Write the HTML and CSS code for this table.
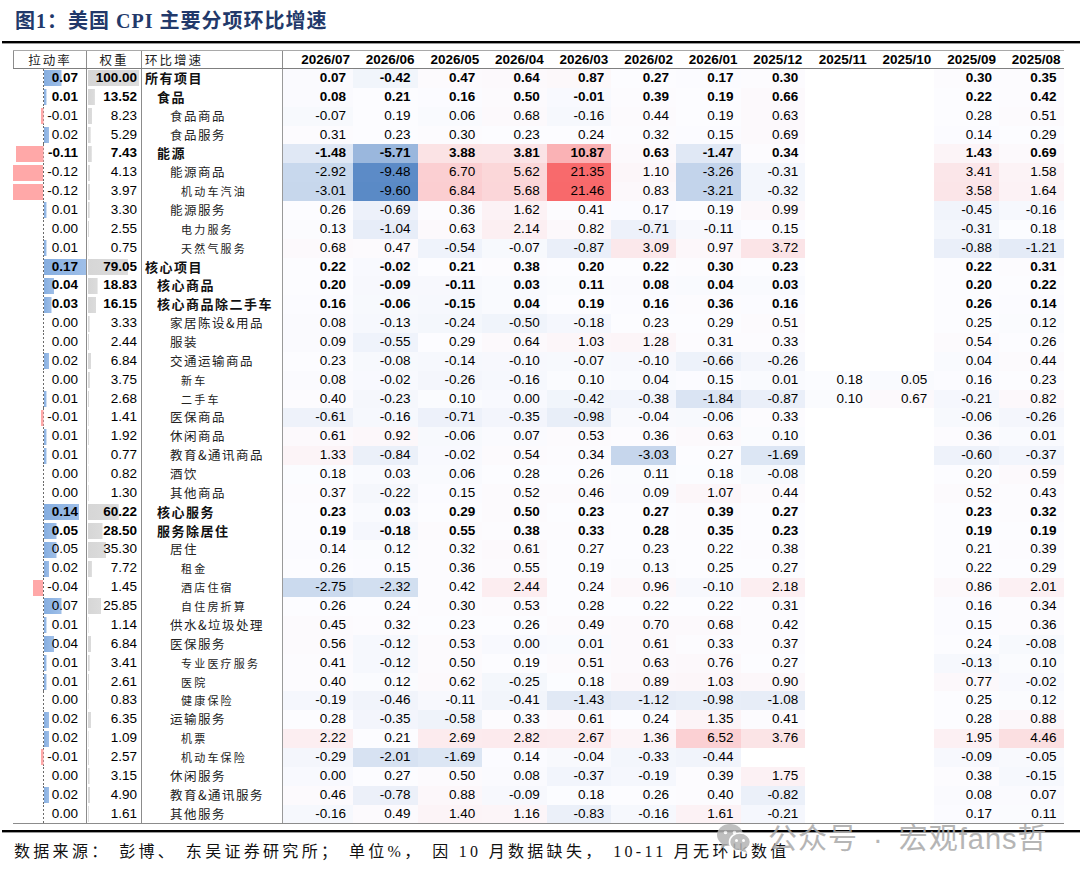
FILE: index.html
```html
<!DOCTYPE html>
<html lang="zh-CN">
<head>
<meta charset="utf-8">
<title>美国 CPI 主要分项环比增速</title>
<link rel="stylesheet" href="styles.css">
</head>
<body>
<div class="page">
  <div class="title">图1：美国 CPI 主要分项环比增速</div>
  <div class="rule"></div>
  <div class="table">
    <div class="row head">
      <div class="c hpull">拉动率</div><div class="c hwt">权重</div><div class="c hname">环比增速</div>
      <div class="c hv">2026/07</div><div class="c hv">2026/06</div><div class="c hv">2026/05</div><div class="c hv">2026/04</div><div class="c hv">2026/03</div><div class="c hv">2026/02</div><div class="c hv">2026/01</div><div class="c hv">2025/12</div><div class="c hv">2025/11</div><div class="c hv">2025/10</div><div class="c hv">2025/09</div><div class="c hv">2025/08</div>
    </div>
    <div class="row l0 b"><div class="c pull">0.07</div><div class="c wt">100.00</div><div class="c name">所有项目</div><div class="c v">0.07</div><div class="c v">-0.42</div><div class="c v">0.47</div><div class="c v">0.64</div><div class="c v">0.87</div><div class="c v">0.27</div><div class="c v">0.17</div><div class="c v">0.30</div><div class="c v"></div><div class="c v"></div><div class="c v">0.30</div><div class="c v">0.35</div></div>
    <div class="row l1 b"><div class="c pull">0.01</div><div class="c wt">13.52</div><div class="c name">食品</div><div class="c v">0.08</div><div class="c v">0.21</div><div class="c v">0.16</div><div class="c v">0.50</div><div class="c v">-0.01</div><div class="c v">0.39</div><div class="c v">0.19</div><div class="c v">0.66</div><div class="c v"></div><div class="c v"></div><div class="c v">0.22</div><div class="c v">0.42</div></div>
    <div class="row l2"><div class="c pull">-0.01</div><div class="c wt">8.23</div><div class="c name">食品商品</div><div class="c v">-0.07</div><div class="c v">0.19</div><div class="c v">0.06</div><div class="c v">0.68</div><div class="c v">-0.16</div><div class="c v">0.44</div><div class="c v">0.19</div><div class="c v">0.63</div><div class="c v"></div><div class="c v"></div><div class="c v">0.28</div><div class="c v">0.51</div></div>
    <div class="row l2"><div class="c pull">0.02</div><div class="c wt">5.29</div><div class="c name">食品服务</div><div class="c v">0.31</div><div class="c v">0.23</div><div class="c v">0.30</div><div class="c v">0.23</div><div class="c v">0.24</div><div class="c v">0.32</div><div class="c v">0.15</div><div class="c v">0.69</div><div class="c v"></div><div class="c v"></div><div class="c v">0.14</div><div class="c v">0.29</div></div>
    <div class="row l1 b"><div class="c pull">-0.11</div><div class="c wt">7.43</div><div class="c name">能源</div><div class="c v">-1.48</div><div class="c v">-5.71</div><div class="c v">3.88</div><div class="c v">3.81</div><div class="c v">10.87</div><div class="c v">0.63</div><div class="c v">-1.47</div><div class="c v">0.34</div><div class="c v"></div><div class="c v"></div><div class="c v">1.43</div><div class="c v">0.69</div></div>
    <div class="row l2"><div class="c pull">-0.12</div><div class="c wt">4.13</div><div class="c name">能源商品</div><div class="c v">-2.92</div><div class="c v">-9.48</div><div class="c v">6.70</div><div class="c v">5.62</div><div class="c v">21.35</div><div class="c v">1.10</div><div class="c v">-3.26</div><div class="c v">-0.31</div><div class="c v"></div><div class="c v"></div><div class="c v">3.41</div><div class="c v">1.58</div></div>
    <div class="row l3"><div class="c pull">-0.12</div><div class="c wt">3.97</div><div class="c name">机动车汽油</div><div class="c v">-3.01</div><div class="c v">-9.60</div><div class="c v">6.84</div><div class="c v">5.68</div><div class="c v">21.46</div><div class="c v">0.83</div><div class="c v">-3.21</div><div class="c v">-0.32</div><div class="c v"></div><div class="c v"></div><div class="c v">3.58</div><div class="c v">1.64</div></div>
    <div class="row l2"><div class="c pull">0.01</div><div class="c wt">3.30</div><div class="c name">能源服务</div><div class="c v">0.26</div><div class="c v">-0.69</div><div class="c v">0.36</div><div class="c v">1.62</div><div class="c v">0.41</div><div class="c v">0.17</div><div class="c v">0.19</div><div class="c v">0.99</div><div class="c v"></div><div class="c v"></div><div class="c v">-0.45</div><div class="c v">-0.16</div></div>
    <div class="row l3"><div class="c pull">0.00</div><div class="c wt">2.55</div><div class="c name">电力服务</div><div class="c v">0.13</div><div class="c v">-1.04</div><div class="c v">0.63</div><div class="c v">2.14</div><div class="c v">0.82</div><div class="c v">-0.71</div><div class="c v">-0.11</div><div class="c v">0.15</div><div class="c v"></div><div class="c v"></div><div class="c v">-0.31</div><div class="c v">0.18</div></div>
    <div class="row l3"><div class="c pull">0.01</div><div class="c wt">0.75</div><div class="c name">天然气服务</div><div class="c v">0.68</div><div class="c v">0.47</div><div class="c v">-0.54</div><div class="c v">-0.07</div><div class="c v">-0.87</div><div class="c v">3.09</div><div class="c v">0.97</div><div class="c v">3.72</div><div class="c v"></div><div class="c v"></div><div class="c v">-0.88</div><div class="c v">-1.21</div></div>
    <div class="row l0 b"><div class="c pull">0.17</div><div class="c wt">79.05</div><div class="c name">核心项目</div><div class="c v">0.22</div><div class="c v">-0.02</div><div class="c v">0.21</div><div class="c v">0.38</div><div class="c v">0.20</div><div class="c v">0.22</div><div class="c v">0.30</div><div class="c v">0.23</div><div class="c v"></div><div class="c v"></div><div class="c v">0.22</div><div class="c v">0.31</div></div>
    <div class="row l1 b"><div class="c pull">0.04</div><div class="c wt">18.83</div><div class="c name">核心商品</div><div class="c v">0.20</div><div class="c v">-0.09</div><div class="c v">-0.11</div><div class="c v">0.03</div><div class="c v">0.11</div><div class="c v">0.08</div><div class="c v">0.04</div><div class="c v">0.03</div><div class="c v"></div><div class="c v"></div><div class="c v">0.20</div><div class="c v">0.22</div></div>
    <div class="row l1 b"><div class="c pull">0.03</div><div class="c wt">16.15</div><div class="c name">核心商品除二手车</div><div class="c v">0.16</div><div class="c v">-0.06</div><div class="c v">-0.15</div><div class="c v">0.04</div><div class="c v">0.19</div><div class="c v">0.16</div><div class="c v">0.36</div><div class="c v">0.16</div><div class="c v"></div><div class="c v"></div><div class="c v">0.26</div><div class="c v">0.14</div></div>
    <div class="row l2"><div class="c pull">0.00</div><div class="c wt">3.33</div><div class="c name">家居陈设&amp;用品</div><div class="c v">0.08</div><div class="c v">-0.13</div><div class="c v">-0.24</div><div class="c v">-0.50</div><div class="c v">-0.18</div><div class="c v">0.23</div><div class="c v">0.29</div><div class="c v">0.51</div><div class="c v"></div><div class="c v"></div><div class="c v">0.25</div><div class="c v">0.12</div></div>
    <div class="row l2"><div class="c pull">0.00</div><div class="c wt">2.44</div><div class="c name">服装</div><div class="c v">0.09</div><div class="c v">-0.55</div><div class="c v">0.29</div><div class="c v">0.64</div><div class="c v">1.03</div><div class="c v">1.28</div><div class="c v">0.31</div><div class="c v">0.33</div><div class="c v"></div><div class="c v"></div><div class="c v">0.54</div><div class="c v">0.26</div></div>
    <div class="row l2"><div class="c pull">0.02</div><div class="c wt">6.84</div><div class="c name">交通运输商品</div><div class="c v">0.23</div><div class="c v">-0.08</div><div class="c v">-0.14</div><div class="c v">-0.10</div><div class="c v">-0.07</div><div class="c v">-0.10</div><div class="c v">-0.66</div><div class="c v">-0.26</div><div class="c v"></div><div class="c v"></div><div class="c v">0.04</div><div class="c v">0.44</div></div>
    <div class="row l3"><div class="c pull">0.00</div><div class="c wt">3.75</div><div class="c name">新车</div><div class="c v">0.08</div><div class="c v">-0.02</div><div class="c v">-0.26</div><div class="c v">-0.16</div><div class="c v">0.10</div><div class="c v">0.04</div><div class="c v">0.15</div><div class="c v">0.01</div><div class="c v">0.18</div><div class="c v">0.05</div><div class="c v">0.16</div><div class="c v">0.23</div></div>
    <div class="row l3"><div class="c pull">0.01</div><div class="c wt">2.68</div><div class="c name">二手车</div><div class="c v">0.40</div><div class="c v">-0.23</div><div class="c v">0.10</div><div class="c v">0.00</div><div class="c v">-0.42</div><div class="c v">-0.38</div><div class="c v">-1.84</div><div class="c v">-0.87</div><div class="c v">0.10</div><div class="c v">0.67</div><div class="c v">-0.21</div><div class="c v">0.82</div></div>
    <div class="row l2"><div class="c pull">-0.01</div><div class="c wt">1.41</div><div class="c name">医保商品</div><div class="c v">-0.61</div><div class="c v">-0.16</div><div class="c v">-0.71</div><div class="c v">-0.35</div><div class="c v">-0.98</div><div class="c v">-0.04</div><div class="c v">-0.06</div><div class="c v">0.33</div><div class="c v"></div><div class="c v"></div><div class="c v">-0.06</div><div class="c v">-0.26</div></div>
    <div class="row l2"><div class="c pull">0.01</div><div class="c wt">1.92</div><div class="c name">休闲商品</div><div class="c v">0.61</div><div class="c v">0.92</div><div class="c v">-0.06</div><div class="c v">0.07</div><div class="c v">0.53</div><div class="c v">0.36</div><div class="c v">0.63</div><div class="c v">0.10</div><div class="c v"></div><div class="c v"></div><div class="c v">0.36</div><div class="c v">0.01</div></div>
    <div class="row l2"><div class="c pull">0.01</div><div class="c wt">0.77</div><div class="c name">教育&amp;通讯商品</div><div class="c v">1.33</div><div class="c v">-0.84</div><div class="c v">-0.02</div><div class="c v">0.54</div><div class="c v">0.34</div><div class="c v">-3.03</div><div class="c v">0.27</div><div class="c v">-1.69</div><div class="c v"></div><div class="c v"></div><div class="c v">-0.60</div><div class="c v">-0.37</div></div>
    <div class="row l2"><div class="c pull">0.00</div><div class="c wt">0.82</div><div class="c name">酒饮</div><div class="c v">0.18</div><div class="c v">0.03</div><div class="c v">0.06</div><div class="c v">0.28</div><div class="c v">0.26</div><div class="c v">0.11</div><div class="c v">0.18</div><div class="c v">-0.08</div><div class="c v"></div><div class="c v"></div><div class="c v">0.20</div><div class="c v">0.59</div></div>
    <div class="row l2"><div class="c pull">0.00</div><div class="c wt">1.30</div><div class="c name">其他商品</div><div class="c v">0.37</div><div class="c v">-0.22</div><div class="c v">0.15</div><div class="c v">0.52</div><div class="c v">0.46</div><div class="c v">0.09</div><div class="c v">1.07</div><div class="c v">0.44</div><div class="c v"></div><div class="c v"></div><div class="c v">0.52</div><div class="c v">0.43</div></div>
    <div class="row l1 b"><div class="c pull">0.14</div><div class="c wt">60.22</div><div class="c name">核心服务</div><div class="c v">0.23</div><div class="c v">0.03</div><div class="c v">0.29</div><div class="c v">0.50</div><div class="c v">0.23</div><div class="c v">0.27</div><div class="c v">0.39</div><div class="c v">0.27</div><div class="c v"></div><div class="c v"></div><div class="c v">0.23</div><div class="c v">0.32</div></div>
    <div class="row l1 b"><div class="c pull">0.05</div><div class="c wt">28.50</div><div class="c name">服务除居住</div><div class="c v">0.19</div><div class="c v">-0.18</div><div class="c v">0.55</div><div class="c v">0.38</div><div class="c v">0.33</div><div class="c v">0.28</div><div class="c v">0.35</div><div class="c v">0.23</div><div class="c v"></div><div class="c v"></div><div class="c v">0.19</div><div class="c v">0.19</div></div>
    <div class="row l2"><div class="c pull">0.05</div><div class="c wt">35.30</div><div class="c name">居住</div><div class="c v">0.14</div><div class="c v">0.12</div><div class="c v">0.32</div><div class="c v">0.61</div><div class="c v">0.27</div><div class="c v">0.23</div><div class="c v">0.22</div><div class="c v">0.38</div><div class="c v"></div><div class="c v"></div><div class="c v">0.21</div><div class="c v">0.39</div></div>
    <div class="row l3"><div class="c pull">0.02</div><div class="c wt">7.72</div><div class="c name">租金</div><div class="c v">0.26</div><div class="c v">0.15</div><div class="c v">0.36</div><div class="c v">0.55</div><div class="c v">0.19</div><div class="c v">0.13</div><div class="c v">0.25</div><div class="c v">0.27</div><div class="c v"></div><div class="c v"></div><div class="c v">0.22</div><div class="c v">0.29</div></div>
    <div class="row l3"><div class="c pull">-0.04</div><div class="c wt">1.45</div><div class="c name">酒店住宿</div><div class="c v">-2.75</div><div class="c v">-2.32</div><div class="c v">0.42</div><div class="c v">2.44</div><div class="c v">0.24</div><div class="c v">0.96</div><div class="c v">-0.10</div><div class="c v">2.18</div><div class="c v"></div><div class="c v"></div><div class="c v">0.86</div><div class="c v">2.01</div></div>
    <div class="row l3"><div class="c pull">0.07</div><div class="c wt">25.85</div><div class="c name">自住房折算</div><div class="c v">0.26</div><div class="c v">0.24</div><div class="c v">0.30</div><div class="c v">0.53</div><div class="c v">0.28</div><div class="c v">0.22</div><div class="c v">0.22</div><div class="c v">0.31</div><div class="c v"></div><div class="c v"></div><div class="c v">0.16</div><div class="c v">0.34</div></div>
    <div class="row l2"><div class="c pull">0.01</div><div class="c wt">1.14</div><div class="c name">供水&amp;垃圾处理</div><div class="c v">0.45</div><div class="c v">0.32</div><div class="c v">0.23</div><div class="c v">0.26</div><div class="c v">0.49</div><div class="c v">0.70</div><div class="c v">0.68</div><div class="c v">0.42</div><div class="c v"></div><div class="c v"></div><div class="c v">0.15</div><div class="c v">0.36</div></div>
    <div class="row l2"><div class="c pull">0.04</div><div class="c wt">6.84</div><div class="c name">医保服务</div><div class="c v">0.56</div><div class="c v">-0.12</div><div class="c v">0.53</div><div class="c v">0.00</div><div class="c v">0.01</div><div class="c v">0.61</div><div class="c v">0.33</div><div class="c v">0.37</div><div class="c v"></div><div class="c v"></div><div class="c v">0.24</div><div class="c v">-0.08</div></div>
    <div class="row l3"><div class="c pull">0.01</div><div class="c wt">3.41</div><div class="c name">专业医疗服务</div><div class="c v">0.41</div><div class="c v">-0.12</div><div class="c v">0.50</div><div class="c v">0.19</div><div class="c v">0.51</div><div class="c v">0.63</div><div class="c v">0.76</div><div class="c v">0.27</div><div class="c v"></div><div class="c v"></div><div class="c v">-0.13</div><div class="c v">0.10</div></div>
    <div class="row l3"><div class="c pull">0.01</div><div class="c wt">2.61</div><div class="c name">医院</div><div class="c v">0.40</div><div class="c v">0.12</div><div class="c v">0.62</div><div class="c v">-0.25</div><div class="c v">0.18</div><div class="c v">0.89</div><div class="c v">1.03</div><div class="c v">0.90</div><div class="c v"></div><div class="c v"></div><div class="c v">0.77</div><div class="c v">-0.02</div></div>
    <div class="row l3"><div class="c pull">0.00</div><div class="c wt">0.83</div><div class="c name">健康保险</div><div class="c v">-0.19</div><div class="c v">-0.46</div><div class="c v">-0.11</div><div class="c v">-0.41</div><div class="c v">-1.43</div><div class="c v">-1.12</div><div class="c v">-0.98</div><div class="c v">-1.08</div><div class="c v"></div><div class="c v"></div><div class="c v">0.25</div><div class="c v">0.12</div></div>
    <div class="row l2"><div class="c pull">0.02</div><div class="c wt">6.35</div><div class="c name">运输服务</div><div class="c v">0.28</div><div class="c v">-0.35</div><div class="c v">-0.58</div><div class="c v">0.33</div><div class="c v">0.61</div><div class="c v">0.24</div><div class="c v">1.35</div><div class="c v">0.41</div><div class="c v"></div><div class="c v"></div><div class="c v">0.28</div><div class="c v">0.88</div></div>
    <div class="row l3"><div class="c pull">0.02</div><div class="c wt">1.09</div><div class="c name">机票</div><div class="c v">2.22</div><div class="c v">0.21</div><div class="c v">2.69</div><div class="c v">2.82</div><div class="c v">2.67</div><div class="c v">1.36</div><div class="c v">6.52</div><div class="c v">3.76</div><div class="c v"></div><div class="c v"></div><div class="c v">1.95</div><div class="c v">4.46</div></div>
    <div class="row l3"><div class="c pull">-0.01</div><div class="c wt">2.57</div><div class="c name">机动车保险</div><div class="c v">-0.29</div><div class="c v">-2.01</div><div class="c v">-1.69</div><div class="c v">0.14</div><div class="c v">-0.04</div><div class="c v">-0.33</div><div class="c v">-0.44</div><div class="c v"></div><div class="c v"></div><div class="c v"></div><div class="c v">-0.09</div><div class="c v">-0.05</div></div>
    <div class="row l2"><div class="c pull">0.00</div><div class="c wt">3.15</div><div class="c name">休闲服务</div><div class="c v">0.00</div><div class="c v">0.27</div><div class="c v">0.50</div><div class="c v">0.08</div><div class="c v">-0.37</div><div class="c v">-0.19</div><div class="c v">0.39</div><div class="c v">1.75</div><div class="c v"></div><div class="c v"></div><div class="c v">0.38</div><div class="c v">-0.15</div></div>
    <div class="row l2"><div class="c pull">0.02</div><div class="c wt">4.90</div><div class="c name">教育&amp;通讯服务</div><div class="c v">0.46</div><div class="c v">-0.78</div><div class="c v">0.88</div><div class="c v">-0.09</div><div class="c v">0.18</div><div class="c v">0.26</div><div class="c v">0.40</div><div class="c v">-0.82</div><div class="c v"></div><div class="c v"></div><div class="c v">0.08</div><div class="c v">0.07</div></div>
    <div class="row l2"><div class="c pull">0.00</div><div class="c wt">1.61</div><div class="c name">其他服务</div><div class="c v">-0.16</div><div class="c v">0.49</div><div class="c v">1.40</div><div class="c v">1.16</div><div class="c v">-0.83</div><div class="c v">-0.16</div><div class="c v">1.61</div><div class="c v">-0.21</div><div class="c v"></div><div class="c v"></div><div class="c v">0.17</div><div class="c v">0.11</div></div>
  </div>
  <div class="rule bottom"></div>
  <div class="source">数据来源<span class="p">：</span>彭博<span class="p">、</span>东吴证券研究所<span class="p">；</span>单位%<span class="p">，</span>因 10 月数据缺失<span class="p">，</span>10-11 月无环比数值</div>
  <div class="wm">
    <svg class="wm-icon" width="36" height="32" viewBox="0 0 36 32" aria-hidden="true">
      <ellipse cx="14" cy="13" rx="13" ry="11" fill="#b4b4b4"/>
      <path d="M6 21 L4.5 27 L11 23 Z" fill="#b4b4b4"/>
      <circle cx="9.5" cy="10.5" r="1.8" fill="#fff"/>
      <circle cx="18.5" cy="10.5" r="1.8" fill="#fff"/>
      <ellipse cx="24" cy="20" rx="10.5" ry="9" fill="#b4b4b4" stroke="#fff" stroke-width="1.6"/>
      <path d="M29 27 L31.5 31 L25 28.5 Z" fill="#b4b4b4"/>
      <circle cx="20.5" cy="18.5" r="1.5" fill="#fff"/>
      <circle cx="27.5" cy="18.5" r="1.5" fill="#fff"/>
    </svg>
    <span class="wm-text">公众号 · 宏观fans哲</span>
  </div>
</div>
<script src="script.js"></script>
</body>
</html>
```

FILE: styles.css
```css
* { box-sizing: border-box; }
html, body { margin: 0; padding: 0; background: #fff; }
body { font-family: "Liberation Sans", Arial, "Noto Sans CJK SC", sans-serif; color: #000; }

.page { width: 1080px; height: 884px; position: relative; overflow: hidden; }

.title {
  height: 41px;
  padding: 9px 0 0 15px;
  font-family: "Liberation Serif", "Noto Sans CJK SC", serif;
  font-weight: bold;
  font-size: 20px;
  line-height: 24px;
  color: #22396a;
  letter-spacing: 1px;
}

.rule { height: 3px; border-top: 2px solid #000; border-bottom: 1px solid #9a9a9a; margin: 0 0 0 2px; }
.rule.bottom { margin-top: 6px; }

.table {
  margin: 6px 0 0 13px;
  width: 1051px;
  border-top: 1px solid #a9a9a9;
  border-bottom: 1px solid #8c8c8c;
}

.row {
  display: grid;
  grid-template-columns: 74px 55px 141px 70px repeat(11, 64.6px);
  height: 18.87px;
  line-height: 18.87px;
}
.row.head { height: 18px; line-height: 17px; border-bottom: 1px solid #7f7f7f; }

.c { white-space: nowrap; overflow: hidden; }

.hpull, .hwt, .hname {
  font-family: "Noto Sans CJK SC", sans-serif;
  font-size: 12.5px;
  letter-spacing: 2px;
  color: #222;
}
.hpull { text-align: center; border-left: 1px solid #8c8c8c; border-right: 1px solid #8c8c8c; }
.hwt { text-align: center; border-right: 1px solid #8c8c8c; }
.hname { padding-left: 3px; border-right: 1px solid #8c8c8c; }
.hv { text-align: right; padding-right: 3px; font-weight: bold; font-size: 13.5px; }

.pull, .wt, .v { font-size: 13.5px; text-align: right; }
.pull {
  --w: 0px;
  padding-right: 8px;
  border-right: 1px solid #8c8c8c;
  background-image: linear-gradient(90deg, #86aee0, #9fbfe8), repeating-linear-gradient(to bottom, #6b6b6b 0 2px, transparent 2px 4px);
  background-repeat: no-repeat, repeat-y;
  background-size: var(--w) 16px, 1px 4px;
  background-position: 31px center, 30px 0;
}
.pull.neg {
  background-image: linear-gradient(90deg, #ffa8a8, #ffa8a8), repeating-linear-gradient(to bottom, #6b6b6b 0 2px, transparent 2px 4px);
  background-position: calc(30px - var(--w)) center, 30px 0;
}
.wt {
  --w: 0px;
  padding-right: 4px;
  border-right: 1px solid #8c8c8c;
  background-image: linear-gradient(90deg, #d6d6d6, #dcdcdc);
  background-repeat: no-repeat;
  background-size: var(--w) 16px;
  background-position: 1px center;
}
.name {
  font-family: "Noto Sans CJK SC", sans-serif;
  font-size: 12.5px;
  letter-spacing: 1.5px;
  color: #222;
  border-right: 1px solid #9a9a9a;
}
.v { padding-right: 7px; }

.l0 .name { padding-left: 3px; }
.l1 .name { padding-left: 15px; }
.l2 .name { padding-left: 28px; }
.l3 .name { padding-left: 39px; font-size: 11px; letter-spacing: 2.2px; }

.b .pull, .b .wt, .b .v { font-weight: bold; }
.b .name { font-weight: bold; font-size: 13px; color: #111; }

.source {
  margin-top: 8px;
  padding-left: 14px;
  font-family: "Liberation Serif", "Noto Sans CJK SC", serif;
  font-size: 16px;
  line-height: 22px;
  letter-spacing: 3.3px;
  color: #111;
}
.source .p { letter-spacing: 12px; }

.wm {
  position: absolute;
  left: 716px;
  top: 822px;
  display: flex;
  align-items: center;
  gap: 16px;
  opacity: 0.85;
}
.wm-icon { margin-top: -2px; }
.wm-text {
  font-family: "Liberation Sans", "Noto Sans CJK SC", sans-serif;
  font-size: 29px;
  line-height: 34px;
  letter-spacing: 1px;
  word-spacing: 6px;
  color: #a9a9a9;
}
```

FILE: script.js
```js
(function () {
  var cells = Array.prototype.slice.call(document.querySelectorAll('.row .v'));
  var vals = [];
  cells.forEach(function (c) {
    var t = c.textContent.trim();
    if (t !== '') vals.push(parseFloat(t));
  });
  var s = vals.slice().sort(function (a, b) { return a - b; });
  var min = s[0], max = s[s.length - 1];
  var p = (s.length - 1) * 0.5, lo = Math.floor(p), hi = Math.ceil(p);
  var mid = s[lo] + (s[hi] - s[lo]) * (p - lo);
  var cMin = [90, 138, 198], cMid = [252, 252, 255], cMax = [248, 105, 107];
  function mix(a, b, t) {
    return 'rgb(' + a.map(function (x, i) { return Math.round(x + (b[i] - x) * t); }).join(',') + ')';
  }
  cells.forEach(function (c) {
    var t = c.textContent.trim();
    if (t === '') return;
    var v = parseFloat(t), col;
    if (v <= mid) col = mix(cMin, cMid, (v - min) / (mid - min));
    else col = mix(cMid, cMax, (v - mid) / (max - mid));
    c.style.backgroundColor = col;
  });
  Array.prototype.forEach.call(document.querySelectorAll('.row .pull'), function (c) {
    var v = parseFloat(c.textContent);
    if (isNaN(v)) return;
    c.style.setProperty('--w', (Math.abs(v) * 250) + 'px');
    if (v < 0) c.classList.add('neg');
  });
  Array.prototype.forEach.call(document.querySelectorAll('.row .wt'), function (c) {
    var v = parseFloat(c.textContent);
    if (isNaN(v)) return;
    c.style.setProperty('--w', (v * 0.51) + 'px');
  });
})();
```
